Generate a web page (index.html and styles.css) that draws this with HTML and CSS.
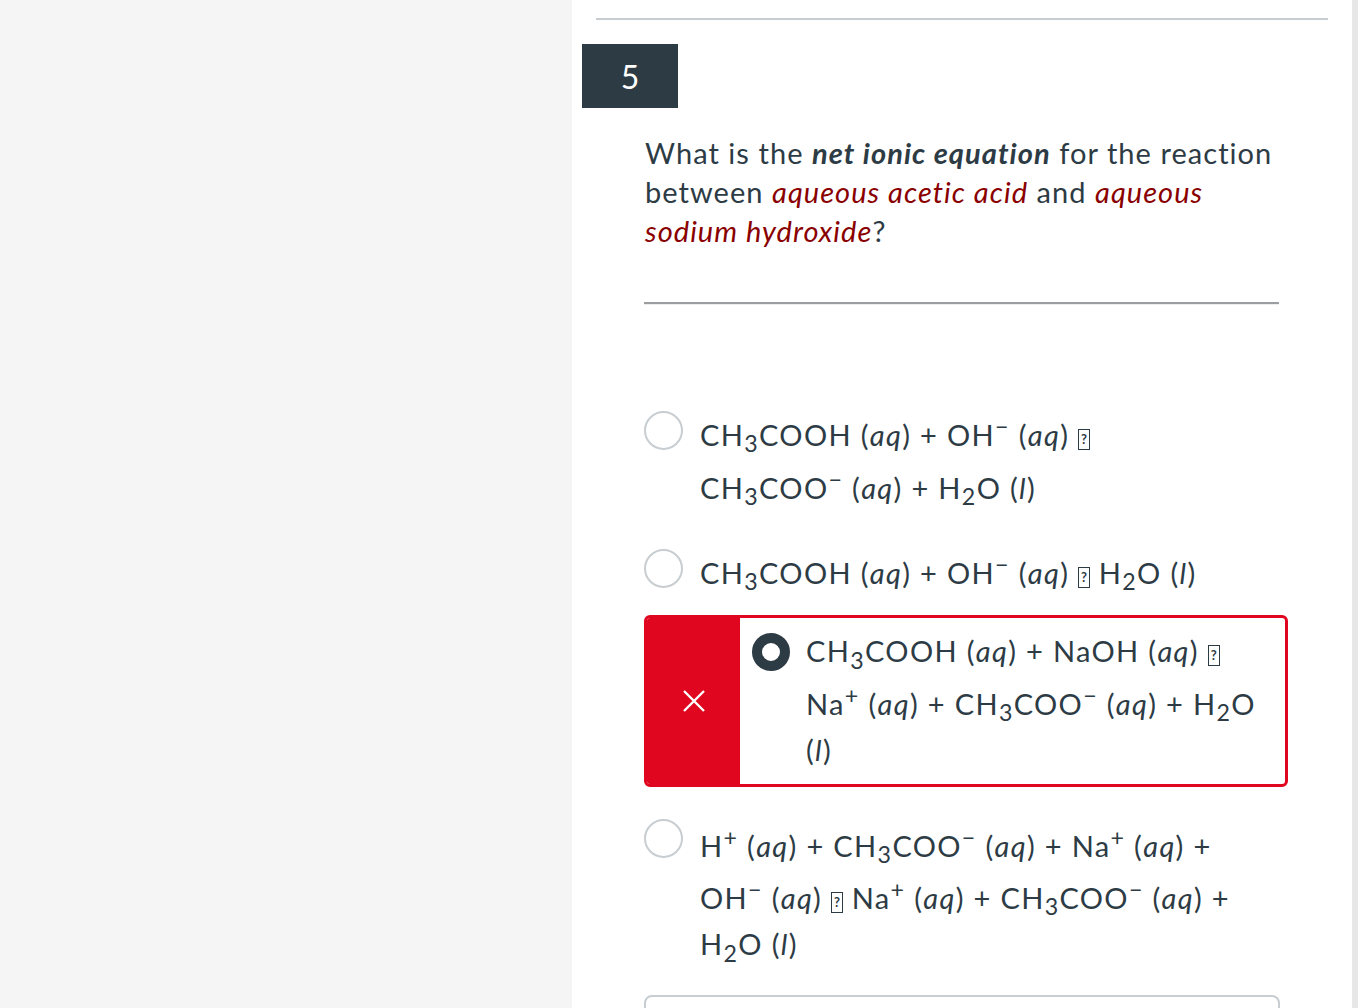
FILE: index.html
```html
<!DOCTYPE html>
<html lang="en">
<head>
<meta charset="utf-8">
<title>Question 5</title>
<link rel="stylesheet" href="styles.css">
</head>
<body>
<div class="page">
  <aside class="side"></aside>
  <main class="main">
    <div class="top-rule"></div>
    <div class="qnum">5</div>
    <div class="content">
      <p class="question">What is the <strong><em>net ionic equation</em></strong> for the reaction between <em class="hl">aqueous acetic acid</em> and <em class="hl">aqueous sodium hydroxide</em>?</p>
      <div class="sep"></div>
      <div class="answers">
        <div class="answer a1">
          <span class="radio"></span>
          <div class="label">CH<sub>3</sub>COOH (<em>aq</em>) + OH<sup>−</sup> (<em>aq</em>) <span class="tofu">?</span> CH<sub>3</sub>COO<sup>−</sup> (<em>aq</em>) + H<sub>2</sub>O (<em>l</em>)</div>
        </div>
        <div class="answer a2">
          <span class="radio"></span>
          <div class="label">CH<sub>3</sub>COOH (<em>aq</em>) + OH<sup>−</sup> (<em>aq</em>) <span class="tofu">?</span> H<sub>2</sub>O (<em>l</em>)</div>
        </div>
        <div class="answer wrong">
          <div class="flag"><svg width="22" height="22" viewBox="0 0 22 22"><path d="M1 1 L21 21 M21 1 L1 21" stroke="#fff" stroke-width="2.4" fill="none"/></svg></div>
          <div class="wrong-body">
            <span class="radio checked"></span>
            <div class="label">CH<sub>3</sub>COOH (<em>aq</em>) + NaOH (<em>aq</em>) <span class="tofu">?</span> Na<sup>+</sup> (<em>aq</em>) + CH<sub>3</sub>COO<sup>−</sup> (<em>aq</em>) + H<sub>2</sub>O (<em>l</em>)</div>
          </div>
        </div>
        <div class="answer a4">
          <span class="radio"></span>
          <div class="label">H<sup>+</sup> (<em>aq</em>) + CH<sub>3</sub>COO<sup>−</sup> (<em>aq</em>) + Na<sup>+</sup> (<em>aq</em>) + OH<sup>−</sup> (<em>aq</em>) <span class="tofu">?</span> Na<sup>+</sup> (<em>aq</em>) + CH<sub>3</sub>COO<sup>−</sup> (<em>aq</em>) + H<sub>2</sub>O (<em>l</em>)</div>
        </div>
      </div>
      <div class="next-box"></div>
    </div>
  </main>
  <div class="track"></div>
</div>
</body>
</html>
```

FILE: styles.css
```css
html, body {
  margin: 0;
  padding: 0;
  height: 100%;
  overflow: hidden;
}
body {
  font-family: Lato, "Open Sans", sans-serif;
  color: #2d3b45;
  background: #fff;
}
.page {
  display: flex;
  height: 1008px;
  overflow: hidden;
}
.side {
  width: 572px;
  flex: none;
  background: #f5f5f5;
}
.main {
  flex: 1;
  background: #fff;
  padding-top: 18px;
}
.track {
  width: 6px;
  flex: none;
  background: #e7e7e7;
}
.top-rule {
  height: 2px;
  background: #c7cdd1;
  margin: 0 24px;
}
.qnum {
  margin: 24px 0 0 10px;
  width: 96px;
  height: 64px;
  background: #2d3b45;
  color: #fff;
  font-size: 32px;
  display: flex;
  align-items: center;
  justify-content: center;
}
.content {
  margin-left: 72px;
  width: 644px;
}
.question {
  margin: 25px 0 0;
  font-size: 29px;
  line-height: 39px;
  letter-spacing: 1.05px;
  padding-left: 1px;
}
.question em.hl {
  color: #8a0000;
}
.sep {
  margin-top: 52px;
  width: 635px;
  height: 2px;
  background: #9a9ea1;
  border-bottom: 1px solid #eceeef;
}
.answers {
  margin-top: 100px;
  display: flex;
  flex-direction: column;
}
.answer {
  display: flex;
  align-items: flex-start;
  gap: 17px;
  font-size: 29px;
  line-height: 46px;
  letter-spacing: 1.35px;
}
.a1 { margin-bottom: 33px; }
.a2 { margin-bottom: 19px; }
.a4 { margin-bottom: 28px; }
.label {
  width: 530px;
}
.label sub {
  font-size: 0.8em;
  line-height: 0;
}
.label sup {
  font-size: 0.8em;
  line-height: 42px;
}
.radio {
  flex: none;
  width: 35px;
  height: 35px;
  border: 2px solid #c7cdd1;
  border-radius: 50%;
  background: #fff;
  margin-top: 6px;
}
.a4 .radio {
  margin-top: 3px;
}
.radio.checked {
  width: 18px;
  height: 18px;
  border: 10px solid #2d3b45;
  margin-top: 5px;
}
.tofu {
  display: inline-block;
  width: 10px;
  height: 19px;
  border: 1px solid #2d3b45;
  font-size: 13px;
  line-height: 19px;
  letter-spacing: 0;
  text-align: center;
  vertical-align: 2px;
  font-weight: 700;
}
.answer.wrong {
  gap: 0;
  align-items: stretch;
  border: 3px solid #e0061f;
  border-radius: 6px;
  overflow: hidden;
  margin-bottom: 29px;
}
.flag {
  flex: none;
  width: 93px;
  background: #e0061f;
  display: flex;
  align-items: center;
  justify-content: center;
}
.wrong-body {
  flex: 1;
  display: flex;
  align-items: flex-start;
  gap: 16px;
  padding: 10px 16px 11px 12px;
}
.wrong-body .label {
  width: auto;
  flex: 1;
}
.next-box {
  flex: none;
  height: 60px;
  width: 632px;
  border: 2px solid #c7cdd1;
  border-radius: 8px;
}
```
